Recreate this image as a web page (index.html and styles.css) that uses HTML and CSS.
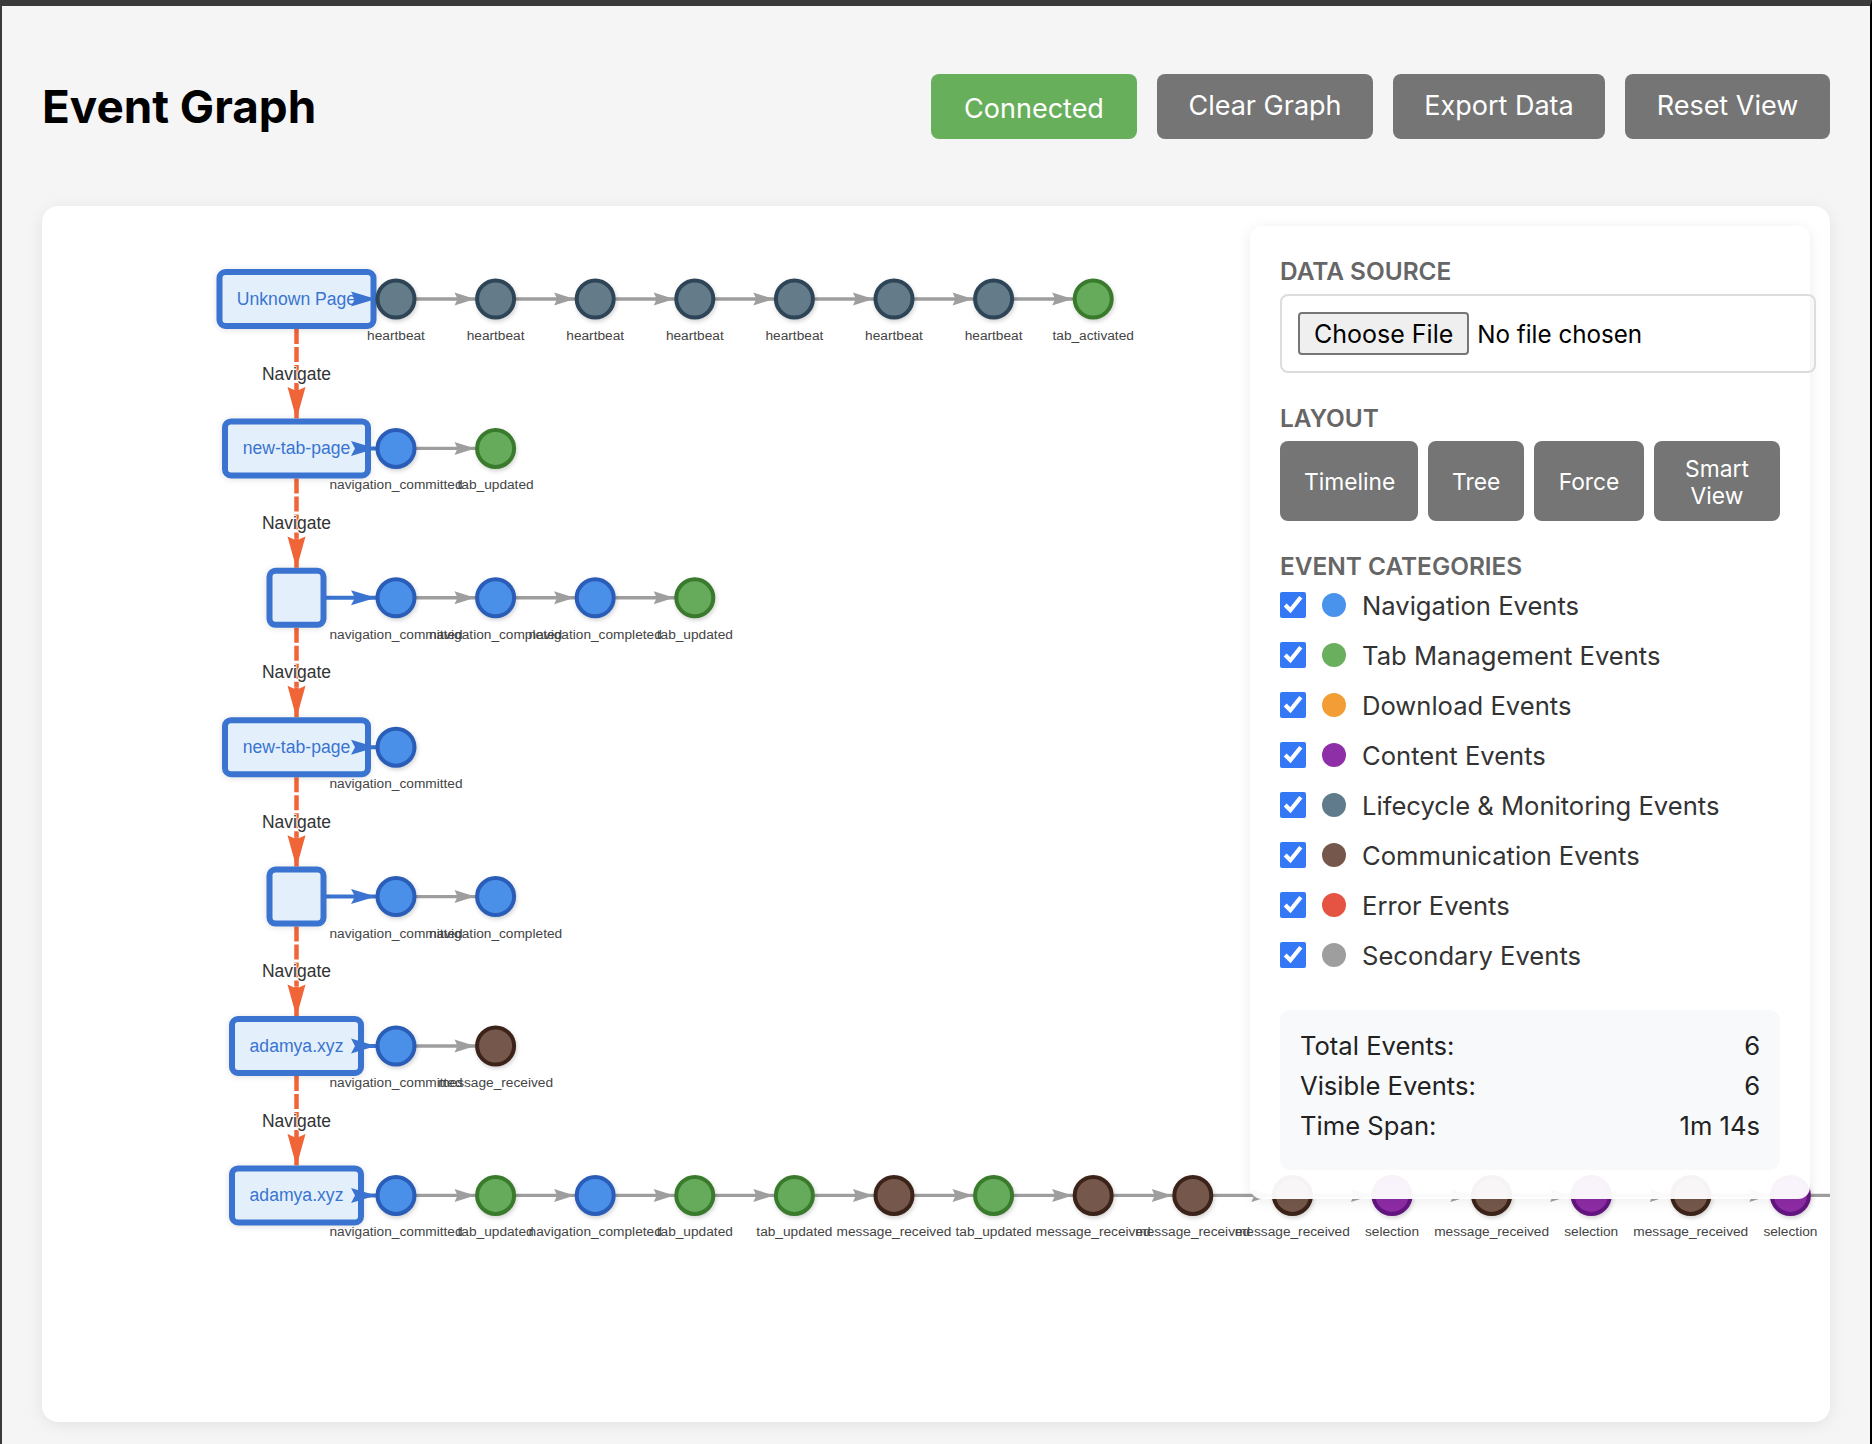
FILE: index.html
```html
<!DOCTYPE html>
<html lang="en">
<head>
    <meta charset="UTF-8">
    <title>Event Graph</title>
    <link rel="stylesheet" href="styles.css">
</head>
<body>

<header class="top">
    <h1>Event Graph</h1>
    <div class="actions">
        <div class="status">Connected</div>
        <button type="button" class="btn">Clear Graph</button>
        <button type="button" class="btn">Export Data</button>
        <button type="button" class="btn">Reset View</button>
    </div>
</header>

<main class="card">
    <svg class="graph" viewBox="42 206 1788 1216" width="1788" height="1216">
        <defs>
            <g id="edge">
                <line class="line-grey" x1="20" y1="0" x2="82" y2="0"/>
                <polygon class="fill-grey" points="79,0 58.5,-6.5 61.5,0 58.5,6.5"/>
            </g>
            <polygon id="blue-arrow" class="fill-blue" points="0,0 -25,-7.5 -21,0 -25,7.5"/>
            <g id="nav">
                <line class="line-nav dashed" x1="0" y1="30" x2="0" y2="90"/>
                <line class="line-nav" x1="0" y1="90" x2="0" y2="119.4"/>
                <polygon class="fill-nav" points="1.5,115 -1.5,115 -9,88 0,92 9,88"/>
            </g>
        </defs>

        <!-- navigate edges -->
        <use href="#nav" x="296.5" y="299"/>
        <use href="#nav" x="296.5" y="448.4"/>
        <use href="#nav" x="296.5" y="597.8"/>
        <use href="#nav" x="296.5" y="747.2"/>
        <use href="#nav" x="296.5" y="896.6"/>
        <use href="#nav" x="296.5" y="1046"/>

        <!-- page to first event -->
        <line class="line-blue" x1="300" y1="299" x2="376" y2="299"/>
        <line class="line-blue" x1="300" y1="448.4" x2="376" y2="448.4"/>
        <line class="line-blue" x1="300" y1="597.8" x2="376" y2="597.8"/>
        <line class="line-blue" x1="300" y1="747.2" x2="376" y2="747.2"/>
        <line class="line-blue" x1="300" y1="896.6" x2="376" y2="896.6"/>
        <line class="line-blue" x1="300" y1="1046" x2="376" y2="1046"/>
        <line class="line-blue" x1="300" y1="1195.4" x2="376" y2="1195.4"/>

        <!-- event edges -->
        <use href="#edge" x="396" y="299"/>
        <use href="#edge" x="495.6" y="299"/>
        <use href="#edge" x="595.2" y="299"/>
        <use href="#edge" x="694.8" y="299"/>
        <use href="#edge" x="794.4" y="299"/>
        <use href="#edge" x="894" y="299"/>
        <use href="#edge" x="993.6" y="299"/>
        <use href="#edge" x="396" y="448.4"/>
        <use href="#edge" x="396" y="597.8"/>
        <use href="#edge" x="495.6" y="597.8"/>
        <use href="#edge" x="595.2" y="597.8"/>
        <use href="#edge" x="396" y="896.6"/>
        <use href="#edge" x="396" y="1046"/>
        <use href="#edge" x="396" y="1195.4"/>
        <use href="#edge" x="495.6" y="1195.4"/>
        <use href="#edge" x="595.2" y="1195.4"/>
        <use href="#edge" x="694.8" y="1195.4"/>
        <use href="#edge" x="794.4" y="1195.4"/>
        <use href="#edge" x="894" y="1195.4"/>
        <use href="#edge" x="993.6" y="1195.4"/>
        <use href="#edge" x="1093.2" y="1195.4"/>
        <use href="#edge" x="1192.8" y="1195.4"/>
        <use href="#edge" x="1292.4" y="1195.4"/>
        <use href="#edge" x="1392" y="1195.4"/>
        <use href="#edge" x="1491.6" y="1195.4"/>
        <use href="#edge" x="1591.2" y="1195.4"/>
        <use href="#edge" x="1690.8" y="1195.4"/>
        <use href="#edge" x="1790.4" y="1195.4"/>

        <!-- pages -->
        <rect class="page" x="219.5" y="272" width="154" height="54" rx="6"/>
        <rect class="page" x="225" y="421.4" width="143" height="54" rx="6"/>
        <rect class="page" x="269.5" y="570.8" width="54" height="54" rx="6"/>
        <rect class="page" x="225" y="720.2" width="143" height="54" rx="6"/>
        <rect class="page" x="269.5" y="869.6" width="54" height="54" rx="6"/>
        <rect class="page" x="232" y="1019" width="129" height="54" rx="6"/>
        <rect class="page" x="232" y="1168.4" width="129" height="54" rx="6"/>
        <text class="page-label" x="296.5" y="304.5">Unknown Page</text>
        <text class="page-label" x="296.5" y="454">new-tab-page</text>
        <text class="page-label" x="296.5" y="752.8">new-tab-page</text>
        <text class="page-label" x="296.5" y="1051.6">adamya.xyz</text>
        <text class="page-label" x="296.5" y="1201">adamya.xyz</text>

        <use href="#blue-arrow" x="376" y="299"/>
        <use href="#blue-arrow" x="376" y="448.4"/>
        <use href="#blue-arrow" x="376" y="597.8"/>
        <use href="#blue-arrow" x="376" y="747.2"/>
        <use href="#blue-arrow" x="376" y="896.6"/>
        <use href="#blue-arrow" x="376" y="1046"/>
        <use href="#blue-arrow" x="376" y="1195.4"/>

        <text class="nav-label" x="296.5" y="379.5">Navigate</text>
        <text class="nav-label" x="296.5" y="528.9">Navigate</text>
        <text class="nav-label" x="296.5" y="678.3">Navigate</text>
        <text class="nav-label" x="296.5" y="827.7">Navigate</text>
        <text class="nav-label" x="296.5" y="977.1">Navigate</text>
        <text class="nav-label" x="296.5" y="1126.5">Navigate</text>

        <!-- row 1 -->
        <circle class="ev life" cx="396" cy="299" r="18.5"/>
        <circle class="ev life" cx="495.6" cy="299" r="18.5"/>
        <circle class="ev life" cx="595.2" cy="299" r="18.5"/>
        <circle class="ev life" cx="694.8" cy="299" r="18.5"/>
        <circle class="ev life" cx="794.4" cy="299" r="18.5"/>
        <circle class="ev life" cx="894" cy="299" r="18.5"/>
        <circle class="ev life" cx="993.6" cy="299" r="18.5"/>
        <circle class="ev tab" cx="1093.2" cy="299" r="18.5"/>
        <text class="ev-label" x="396" y="340">heartbeat</text>
        <text class="ev-label" x="495.6" y="340">heartbeat</text>
        <text class="ev-label" x="595.2" y="340">heartbeat</text>
        <text class="ev-label" x="694.8" y="340">heartbeat</text>
        <text class="ev-label" x="794.4" y="340">heartbeat</text>
        <text class="ev-label" x="894" y="340">heartbeat</text>
        <text class="ev-label" x="993.6" y="340">heartbeat</text>
        <text class="ev-label" x="1093.2" y="340">tab_activated</text>

        <!-- row 2 -->
        <circle class="ev navi" cx="396" cy="448.4" r="18.5"/>
        <circle class="ev tab" cx="495.6" cy="448.4" r="18.5"/>
        <text class="ev-label" x="396" y="489.4">navigation_committed</text>
        <text class="ev-label" x="495.6" y="489.4">tab_updated</text>

        <!-- row 3 -->
        <circle class="ev navi" cx="396" cy="597.8" r="18.5"/>
        <circle class="ev navi" cx="495.6" cy="597.8" r="18.5"/>
        <circle class="ev navi" cx="595.2" cy="597.8" r="18.5"/>
        <circle class="ev tab" cx="694.8" cy="597.8" r="18.5"/>
        <text class="ev-label" x="396" y="638.8">navigation_committed</text>
        <text class="ev-label" x="495.6" y="638.8">navigation_completed</text>
        <text class="ev-label" x="595.2" y="638.8">navigation_completed</text>
        <text class="ev-label" x="694.8" y="638.8">tab_updated</text>

        <!-- row 4 -->
        <circle class="ev navi" cx="396" cy="747.2" r="18.5"/>
        <text class="ev-label" x="396" y="788.2">navigation_committed</text>

        <!-- row 5 -->
        <circle class="ev navi" cx="396" cy="896.6" r="18.5"/>
        <circle class="ev navi" cx="495.6" cy="896.6" r="18.5"/>
        <text class="ev-label" x="396" y="937.6">navigation_committed</text>
        <text class="ev-label" x="495.6" y="937.6">navigation_completed</text>

        <!-- row 6 -->
        <circle class="ev navi" cx="396" cy="1046" r="18.5"/>
        <circle class="ev msg" cx="495.6" cy="1046" r="18.5"/>
        <text class="ev-label" x="396" y="1087">navigation_committed</text>
        <text class="ev-label" x="495.6" y="1087">message_received</text>

        <!-- row 7 -->
        <circle class="ev navi" cx="396" cy="1195.4" r="18.5"/>
        <circle class="ev tab" cx="495.6" cy="1195.4" r="18.5"/>
        <circle class="ev navi" cx="595.2" cy="1195.4" r="18.5"/>
        <circle class="ev tab" cx="694.8" cy="1195.4" r="18.5"/>
        <circle class="ev tab" cx="794.4" cy="1195.4" r="18.5"/>
        <circle class="ev msg" cx="894" cy="1195.4" r="18.5"/>
        <circle class="ev tab" cx="993.6" cy="1195.4" r="18.5"/>
        <circle class="ev msg" cx="1093.2" cy="1195.4" r="18.5"/>
        <circle class="ev msg" cx="1192.8" cy="1195.4" r="18.5"/>
        <circle class="ev msg" cx="1292.4" cy="1195.4" r="18.5"/>
        <circle class="ev sel" cx="1392" cy="1195.4" r="18.5"/>
        <circle class="ev msg" cx="1491.6" cy="1195.4" r="18.5"/>
        <circle class="ev sel" cx="1591.2" cy="1195.4" r="18.5"/>
        <circle class="ev msg" cx="1690.8" cy="1195.4" r="18.5"/>
        <circle class="ev sel" cx="1790.4" cy="1195.4" r="18.5"/>
        <text class="ev-label" x="396" y="1236.4">navigation_committed</text>
        <text class="ev-label" x="495.6" y="1236.4">tab_updated</text>
        <text class="ev-label" x="595.2" y="1236.4">navigation_completed</text>
        <text class="ev-label" x="694.8" y="1236.4">tab_updated</text>
        <text class="ev-label" x="794.4" y="1236.4">tab_updated</text>
        <text class="ev-label" x="894" y="1236.4">message_received</text>
        <text class="ev-label" x="993.6" y="1236.4">tab_updated</text>
        <text class="ev-label" x="1093.2" y="1236.4">message_received</text>
        <text class="ev-label" x="1192.8" y="1236.4">message_received</text>
        <text class="ev-label" x="1292.4" y="1236.4">message_received</text>
        <text class="ev-label" x="1392" y="1236.4">selection</text>
        <text class="ev-label" x="1491.6" y="1236.4">message_received</text>
        <text class="ev-label" x="1591.2" y="1236.4">selection</text>
        <text class="ev-label" x="1690.8" y="1236.4">message_received</text>
        <text class="ev-label" x="1790.4" y="1236.4">selection</text>
    </svg>

    <aside class="panel">
        <h3>Data Source</h3>
        <input type="file" class="file">

        <h3 class="gap">Layout</h3>
        <div class="layouts">
            <button type="button" class="btn small">Timeline</button>
            <button type="button" class="btn small">Tree</button>
            <button type="button" class="btn small">Force</button>
            <button type="button" class="btn small">Smart View</button>
        </div>

        <h3 class="gap tight">Event Categories</h3>
        <label class="cat"><input type="checkbox" checked><span class="dot c-nav"></span>Navigation Events</label>
        <label class="cat"><input type="checkbox" checked><span class="dot c-tab"></span>Tab Management Events</label>
        <label class="cat"><input type="checkbox" checked><span class="dot c-down"></span>Download Events</label>
        <label class="cat"><input type="checkbox" checked><span class="dot c-content"></span>Content Events</label>
        <label class="cat"><input type="checkbox" checked><span class="dot c-life"></span>Lifecycle &amp; Monitoring Events</label>
        <label class="cat"><input type="checkbox" checked><span class="dot c-msg"></span>Communication Events</label>
        <label class="cat"><input type="checkbox" checked><span class="dot c-err"></span>Error Events</label>
        <label class="cat"><input type="checkbox" checked><span class="dot c-sec"></span>Secondary Events</label>

        <div class="stats">
            <div class="stat"><span>Total Events:</span><span>6</span></div>
            <div class="stat"><span>Visible Events:</span><span>6</span></div>
            <div class="stat"><span>Time Span:</span><span>1m 14s</span></div>
        </div>
    </aside>
</main>

</body>
</html>
```

FILE: styles.css
```css
*{box-sizing:border-box}
body{
    margin:0;
    height:1444px;
    overflow:hidden;
    background:#f5f5f5;
    border-top:6px solid #3a3a3a;
    border-left:2px solid #3a3a3a;
    border-right:2px solid #000;
    padding:68px 40px 0 40px;
    font-family:Inter,"Liberation Sans",sans-serif;
    color:#333;
}
.top{
    display:flex;
    justify-content:space-between;
    align-items:center;
    height:65px;
    margin-bottom:67px;
}
h1{
    margin:0;
    font-size:45.8px;
    font-weight:700;
    color:#000;
}
.actions{
    display:grid;
    grid-template-columns:206px 216px 212px 205px;
    gap:20px;
}
.status,.btn{
    border:none;
    border-radius:8px;
    color:white;
    font-family:Inter,"Liberation Sans",sans-serif;
    font-size:27px;
    line-height:33px;
    text-align:center;
}
.status{
    padding:18px 0 14px;
    background:#68af5c;
}
.btn{
    padding:15px 0 17px;
    background:#757575;
}
.btn.small{
    padding:2px 24px 0;
    font-size:22.8px;
    line-height:27.5px;
}
.card{
    position:relative;
    height:1216px;
    overflow:hidden;
    background:white;
    border-radius:16px;
    box-shadow:0 3px 16px rgba(0,0,0,0.08);
}
.graph{
    position:absolute;
    left:0;
    top:0;
    font-family:"Liberation Sans",sans-serif;
}
.line-grey{stroke:#9e9e9e;stroke-width:3.4}
.fill-grey{fill:#9e9e9e}
.line-blue{stroke:#3a74d0;stroke-width:4}
.fill-blue{fill:#3a74d0}
.line-nav{stroke:#f06537;stroke-width:4.5}
.line-nav.dashed{stroke-dasharray:15 3}
.fill-nav{fill:#f06537}
.page{
    fill:#e3f0fb;
    stroke:#3a74d0;
    stroke-width:6;
    filter:drop-shadow(0 1px 3px rgba(0,0,0,0.12));
}
.page-label{
    fill:#3a74d0;
    font-size:17.6px;
    text-anchor:middle;
}
.nav-label{
    fill:#333;
    font-size:17.5px;
    text-anchor:middle;
    stroke:white;
    stroke-width:1.5;
    paint-order:stroke;
}
.ev{
    stroke-width:4;
    filter:drop-shadow(1px 2px 2px rgba(0,0,0,0.18));
}
.ev-label{
    fill:#444;
    font-size:13.7px;
    text-anchor:middle;
}
.navi{fill:#4a90e9;stroke:#2a5db8}
.tab{fill:#66ab5b;stroke:#3a7a2c}
.life{fill:#647b89;stroke:#2e4558}
.msg{fill:#75584b;stroke:#3c2319}
.sel{fill:#8e2ca6;stroke:#63157f}
.panel{
    position:absolute;
    top:20px;
    left:1208px;
    width:560px;
    height:973px;
    padding:30px;
    background:rgba(255,255,255,0.95);
    border-radius:12px;
    box-shadow:0 2px 14px rgba(0,0,0,0.08);
}
h3{
    margin:0 0 9px;
    padding-top:1px;
    font-size:24.4px;
    line-height:28px;
    font-weight:600;
    color:#666;
    text-transform:uppercase;
}
h3.gap{margin-top:30px}
h3.gap.tight{margin:30px 0 0}
.file{
    display:block;
    box-sizing:content-box;
    width:500px;
    margin:0;
    padding:16px;
    border:2px solid #ddd;
    border-radius:8px;
    font-family:Inter,"Liberation Sans",sans-serif;
    font-size:24.2px;
    color:#000;
}
.file::file-selector-button{
    height:43px;
    margin-right:8px;
    padding:0 14px;
    background:#efefef;
    border:2px solid #767676;
    border-radius:4px;
    font-family:inherit;
    font-size:25px;
}
.layouts{
    display:grid;
    grid-template-columns:138px 96px 110px 126px;
    gap:10px;
    height:80px;
}
.cat{
    display:flex;
    align-items:center;
    height:50px;
    font-size:25.6px;
    color:#333;
}
.cat input{
    width:26px;
    height:26px;
    margin:0 16px 0 0;
    accent-color:#3478f6;
}
.dot{
    width:24px;
    height:24px;
    margin-right:16px;
    border-radius:50%;
}
.c-nav{background:#4a93ec}
.c-tab{background:#6aaf5e}
.c-down{background:#f39d36}
.c-content{background:#8e2fa8}
.c-life{background:#607b8b}
.c-msg{background:#75584b}
.c-err{background:#e55342}
.c-sec{background:#9e9e9e}
.stats{
    height:160px;
    margin-top:30px;
    padding:15px 20px;
    background:#f8f9fa;
    border-radius:10px;
    font-size:25.6px;
    color:#222;
}
.stat{
    display:flex;
    justify-content:space-between;
    align-items:center;
    height:40px;
}
```
